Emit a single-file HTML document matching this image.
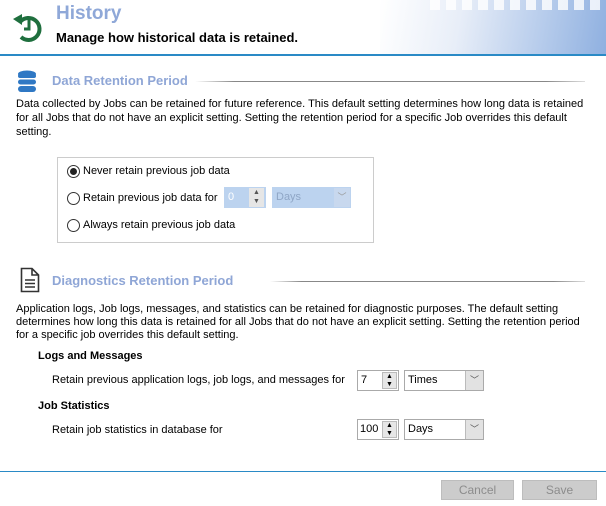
<!DOCTYPE html>
<html><head><meta charset="utf-8"><style>
*{margin:0;padding:0;box-sizing:border-box}
body{width:606px;height:506px;background:#fff;font-family:"Liberation Sans",Tahoma,sans-serif;font-size:11px;color:#000;position:relative;overflow:hidden}
.a{position:absolute;white-space:nowrap}
.sec{font-weight:bold;font-size:13px;color:#8fa6d6}
.hr{position:absolute;height:1px;background:linear-gradient(90deg,#fff,#888 10%,#888 90%,#ddd)}
.radio{position:absolute;width:13px;height:13px;border:1px solid #333;border-radius:50%;background:#fff}
.box{position:absolute;border:1px solid #999;background:#fff}
.btn{position:absolute;height:20px;background:#ccc;border:1px solid #bdbdbd;color:#8c8c8c;text-align:center;line-height:18px;font-size:12px}
</style></head><body>
<div style="position:absolute;left:380px;top:0;width:226px;height:54px;background:linear-gradient(100deg,#fff 0%,#e8eef8 35%,#b8cdec 70%,#8fb0e0 100%)"></div>
<div style="position:absolute;left:430px;top:0;width:176px;height:10px;background:repeating-linear-gradient(90deg,rgba(255,255,255,.8) 0 10px,transparent 10px 16px)"></div>
<div style="position:absolute;left:0;top:54px;width:606px;height:2px;background:#2a8ac6"></div>
<svg class="a" style="left:12px;top:10px" width="30" height="34" viewBox="0 0 30 34">
<path d="M8 12 A11 11 0 1 1 9 27" fill="none" stroke="#1f6f3e" stroke-width="4"/>
<path d="M1 9 L10 4 L10 15 Z" fill="#1f6f3e"/>
<path d="M17 10 V19 H12" fill="none" stroke="#1f6f3e" stroke-width="3"/>
</svg>
<div class="a" style="left:56px;top:3px;font-size:19px;font-weight:bold;color:#8fa8d8">History</div>
<div class="a" style="left:56px;top:30px;font-size:13px;font-weight:bold">Manage how historical data is retained.</div>

<svg class="a" style="left:16px;top:70px" width="22" height="24" viewBox="0 0 22 24">
<g fill="#2f78c4"><ellipse cx="11" cy="4" rx="9" ry="3.5"/><rect x="2" y="4" width="18" height="4" rx="2"/>
<rect x="2" y="9.5" width="18" height="5" rx="2.5"/><rect x="2" y="16" width="18" height="6" rx="3"/></g></svg>
<div class="a sec" style="left:52px;top:73px">Data Retention Period</div>
<div class="hr" style="left:195px;top:81px;width:390px"></div>
<div class="a" style="left:16px;top:97px;line-height:14px">Data collected by Jobs can be retained for future reference. This default setting determines how long data is retained<br>for all Jobs that do not have an explicit setting. Setting the retention period for a specific Job overrides this default<br>setting.</div>

<div class="box" style="left:57px;top:157px;width:317px;height:86px;border-color:#ccc"></div>
<div class="radio" style="left:67px;top:165px"></div><div class="a" style="left:70px;top:168px;width:7px;height:7px;border-radius:50%;background:#222"></div>
<div class="a" style="left:83px;top:165px">Never retain previous job data</div>
<div class="radio" style="left:67px;top:192px"></div>
<div class="a" style="left:83px;top:192px">Retain previous job data for</div>
<div class="box" style="left:224px;top:187px;width:42px;height:21px;background:#bcd3ef;border-color:#bcd3ef"></div>
<div class="a" style="left:228px;top:191px;color:#fff">0</div>
<div class="a" style="left:249px;top:188px;width:15px;height:19px;background:#e6e6e6;font-size:7px;line-height:9px;text-align:center;color:#555">▲<br>▼</div>
<div class="box" style="left:272px;top:187px;width:79px;height:21px;background:#bcd3ef;border-color:#bcd3ef"></div>
<div class="a" style="left:276px;top:191px;color:#8fa6c6">Days</div>
<div class="a" style="left:334px;top:188px;width:16px;height:19px;background:#c8d8ee;color:#999;text-align:center;font-size:9px;line-height:19px">﹀</div>
<div class="radio" style="left:67px;top:219px"></div>
<div class="a" style="left:83px;top:219px">Always retain previous job data</div>

<svg class="a" style="left:20px;top:267px" width="20" height="26" viewBox="0 0 20 26">
<path d="M1.5 1.5 H12 L18.5 8 V24.5 H1.5 Z M12 1.5 V8 H18.5" fill="none" stroke="#333" stroke-width="1.6"/>
<path d="M5 13 H15 M5 16.5 H15 M5 20 H15" stroke="#333" stroke-width="1.6"/></svg>
<div class="a sec" style="left:52px;top:273px">Diagnostics Retention Period</div>
<div class="hr" style="left:270px;top:281px;width:315px"></div>
<div class="a" style="left:16px;top:303px;line-height:13px">Application logs, Job logs, messages, and statistics can be retained for diagnostic purposes. The default setting<br>determines how long this data is retained for all Jobs that do not have an explicit setting. Setting the retention period<br>for a specific job overrides this default setting.</div>

<div class="a" style="left:38px;top:350px;font-weight:bold">Logs and Messages</div>
<div class="a" style="left:52px;top:374px">Retain previous application logs, job logs, and messages for</div>
<div class="box" style="left:357px;top:370px;width:42px;height:21px;border-color:#aaa"></div>
<div class="a" style="left:361px;top:374px">7</div>
<div class="a" style="left:382px;top:372px;width:15px;height:17px;background:#e6e6e6;border:1px solid #bbb;font-size:7px;line-height:7.5px;text-align:center">▲<br>▼</div>
<div class="box" style="left:404px;top:370px;width:80px;height:21px;border-color:#aaa"></div>
<div class="a" style="left:408px;top:374px">Times</div>
<div class="a" style="left:465px;top:371px;width:18px;height:19px;background:#e2e2e2;border-left:1px solid #bbb;text-align:center;font-size:9px;line-height:19px;color:#555">﹀</div>

<div class="a" style="left:38px;top:400px;font-weight:bold">Job Statistics</div>
<div class="a" style="left:52px;top:424px">Retain job statistics in database for</div>
<div class="box" style="left:357px;top:419px;width:42px;height:21px;border-color:#aaa"></div>
<div class="a" style="left:360px;top:423px">100</div>
<div class="a" style="left:382px;top:421px;width:15px;height:17px;background:#e6e6e6;border:1px solid #bbb;font-size:7px;line-height:7.5px;text-align:center">▲<br>▼</div>
<div class="box" style="left:404px;top:419px;width:80px;height:21px;border-color:#aaa"></div>
<div class="a" style="left:408px;top:423px">Days</div>
<div class="a" style="left:465px;top:420px;width:18px;height:19px;background:#e2e2e2;border-left:1px solid #bbb;text-align:center;font-size:9px;line-height:19px;color:#555">﹀</div>

<div style="position:absolute;left:0;top:471px;width:606px;height:1px;background:#2a8ac6"></div>
<div class="btn" style="left:441px;top:480px;width:73px">Cancel</div>
<div class="btn" style="left:522px;top:480px;width:75px">Save</div>
</body></html>
